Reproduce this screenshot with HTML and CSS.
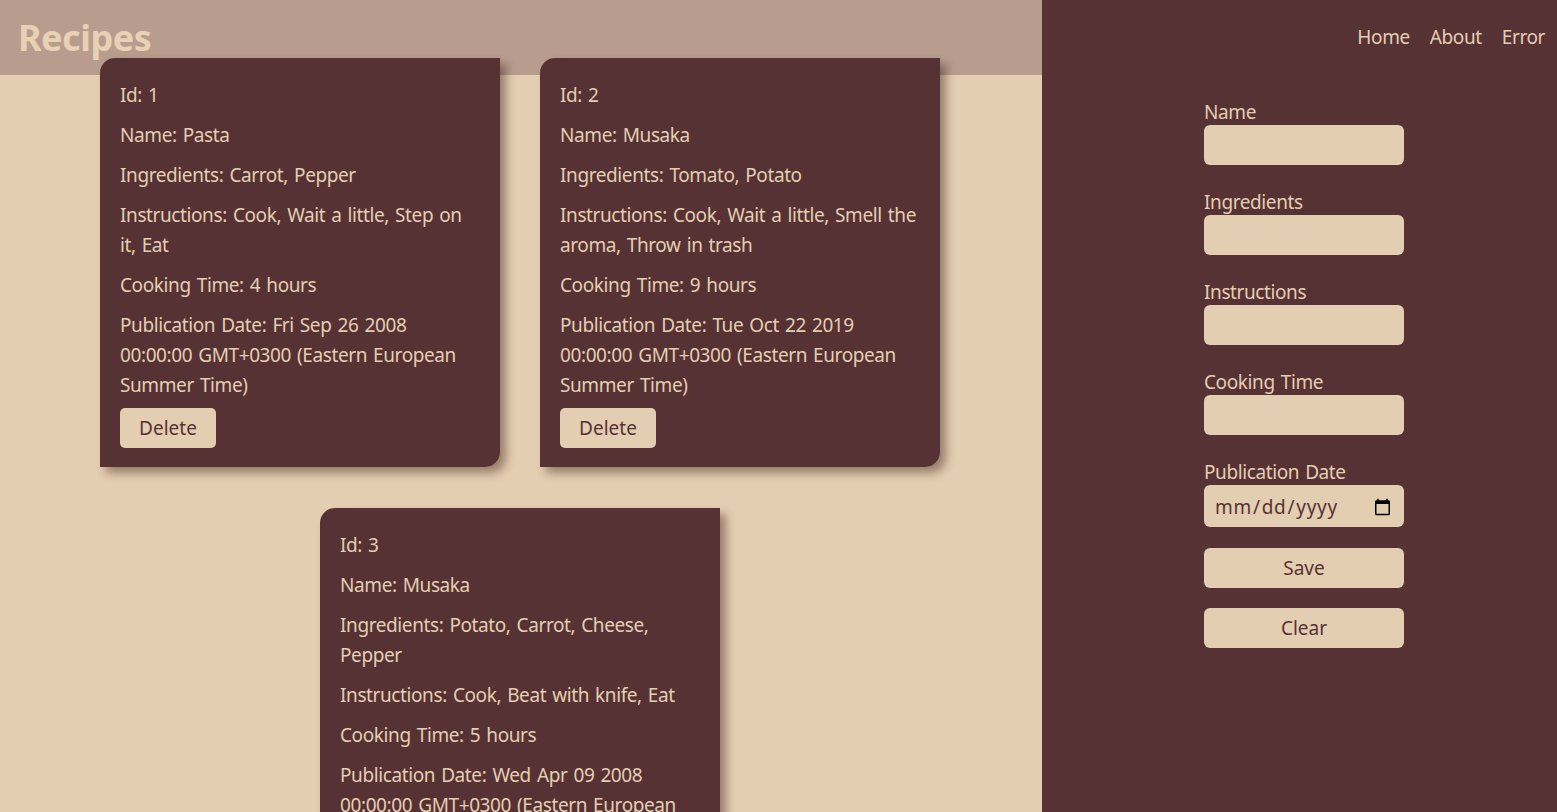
FILE: index.html
```html
<!DOCTYPE html>
<html lang="en">
<head>
<meta charset="utf-8">
<title>Recipes</title>
<link rel="stylesheet" href="styles.css">
</head>
<body>
<div class="page">
  <main class="main">
    <header class="header">
      <h1 class="title">Recipes</h1>
    </header>
    <section class="cards">
      <article class="card">
        <p>Id: 1</p>
        <p>Name: Pasta</p>
        <p>Ingredients: Carrot, Pepper</p>
        <p>Instructions: Cook, Wait a little, Step on it, Eat</p>
        <p>Cooking Time: 4 hours</p>
        <p>Publication Date: Fri Sep 26 2008 00:00:00 GMT+0300 (Eastern European Summer Time)</p>
        <button class="btn-delete">Delete</button>
      </article>
      <article class="card">
        <p>Id: 2</p>
        <p>Name: Musaka</p>
        <p>Ingredients: Tomato, Potato</p>
        <p>Instructions: Cook, Wait a little, Smell the aroma, Throw in trash</p>
        <p>Cooking Time: 9 hours</p>
        <p>Publication Date: Tue Oct 22 2019 00:00:00 GMT+0300 (Eastern European Summer Time)</p>
        <button class="btn-delete">Delete</button>
      </article>
      <article class="card">
        <p>Id: 3</p>
        <p>Name: Musaka</p>
        <p>Ingredients: Potato, Carrot, Cheese, Pepper</p>
        <p>Instructions: Cook, Beat with knife, Eat</p>
        <p>Cooking Time: 5 hours</p>
        <p>Publication Date: Wed Apr 09 2008 00:00:00 GMT+0300 (Eastern European Summer Time)</p>
        <button class="btn-delete">Delete</button>
      </article>
    </section>
  </main>
  <aside class="sidebar">
    <nav class="nav">
      <a href="#">Home</a>
      <a href="#">About</a>
      <a href="#">Error</a>
    </nav>
    <form class="form">
      <label class="field"><span>Name</span><input type="text"></label>
      <label class="field"><span>Ingredients</span><input type="text"></label>
      <label class="field"><span>Instructions</span><input type="text"></label>
      <label class="field"><span>Cooking Time</span><input type="text"></label>
      <label class="field"><span>Publication Date</span><input type="date" class="date"></label>
      <button type="button" class="btn-form">Save</button>
      <button type="button" class="btn-form">Clear</button>
    </form>
  </aside>
</div>
</body>
</html>
```

FILE: styles.css
```css
* { box-sizing: border-box; }

html, body {
  margin: 0;
  height: 100%;
  overflow: hidden;
}

body {
  font-family: "Noto Sans", "Open Sans", sans-serif;
  font-size: 19px;
  letter-spacing: -0.4px;
  word-spacing: 1.5px;
  background: #e4ceb2;
  color: #e4ceb2;
}

.page {
  display: flex;
  height: 812px;
}

.main {
  flex: 0 0 1042px;
  background: #e4ceb2;
}

.header {
  height: 75px;
  background: #b89d8e;
  padding: 15px 0 0 18px;
}

.title {
  margin: 0;
  font-size: 36px;
  line-height: 46px;
  font-weight: 700;
  color: #e8d1b5;
  letter-spacing: -0.5px;
}

.cards {
  display: flex;
  flex-wrap: wrap;
  justify-content: center;
  gap: 41px 40px;
  margin-top: -17px;
  padding-right: 2px;
}

.card {
  width: 400px;
  background: #573234;
  border-radius: 15px 0 15px 0;
  box-shadow: 6px 6px 10px rgba(60, 30, 20, 0.45);
  padding: 22px 20px 19px;
}

.card p {
  margin: 0 0 10px;
  line-height: 30px;
}

.btn-delete {
  display: block;
  width: 96px;
  height: 40px;
  margin-top: -2px;
  border: none;
  border-radius: 5px;
  background: #e4ceb2;
  color: #573234;
  font: inherit;
  font-size: 19px;
  padding: 0;
}

.sidebar {
  flex: 1;
  background: #573234;
  padding: 0 12px 0 162px;
}

.nav {
  display: flex;
  justify-content: flex-end;
  gap: 20px;
  padding-top: 22px;
  height: 100px;
}

.nav a {
  color: #e4ceb2;
  text-decoration: none;
  font-size: 19px;
  line-height: 30px;
}

.form {
  width: 200px;
  display: flex;
  flex-direction: column;
}

.field {
  display: flex;
  flex-direction: column;
  margin-bottom: 25px;
}

.field span {
  line-height: 25px;
  font-size: 19px;
}

.field input {
  width: 200px;
  height: 40px;
  border: none;
  border-radius: 6px;
  background: #e4ceb2;
  color: #573234;
  font: inherit;
  font-size: 19px;
  padding: 0 10px;
  outline: none;
}

.field input.date {
  height: 42px;
  letter-spacing: 0.7px;
  word-spacing: 0;
  padding-top: 2px;
}

.field:nth-child(5) {
  margin-bottom: 21px;
}

.btn-form {
  width: 200px;
  height: 40px;
  border: none;
  border-radius: 6px;
  background: #e4ceb2;
  color: #573234;
  font: inherit;
  font-size: 19px;
  margin-bottom: 20px;
  padding: 0;
}
```
